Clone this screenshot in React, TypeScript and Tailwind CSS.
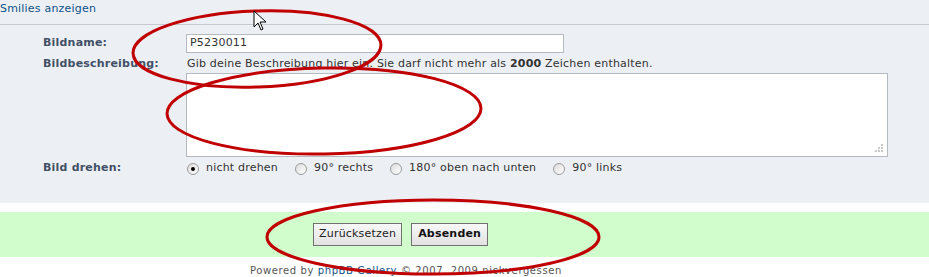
import React from "react";

const font = { fontFamily: '"DejaVu Sans", Verdana, sans-serif' };

function Radio({ checked, label }: { checked?: boolean; label: string }) {
  return (
    <span className="flex items-center">
      <span className="relative w-[12px] h-[12px] rounded-full border border-[#9a9a9a] bg-gradient-to-br from-[#dcdcdc] to-white flex items-center justify-center">
        {checked && <span className="w-[4px] h-[4px] rounded-full bg-black" />}
      </span>
      <span className="ml-[7px]">{label}</span>
    </span>
  );
}

export default function App() {
  return (
    <div className="relative w-[929px] h-[277px] overflow-hidden bg-white text-[11px] tracking-[0.2px] text-[#333333]" style={font}>
      <div className="bg-[#eceff3] h-[203px] flex flex-col">
        <div className="h-[25px] border-b border-[#c6cacf] pt-[1px]">
          <span className="text-[#105289]">Smilies anzeigen</span>
        </div>
        <div className="grid grid-cols-[143px_1fr] pl-[43px] pt-[9px]">
          <div className="font-bold text-[#425067] h-[19px] flex items-center">Bildname:</div>
          <div>
            <div className="w-[378px] h-[19px] border border-[#b4bac0] bg-white flex items-center pl-[3px] text-[#333]">
              P5230011
            </div>
          </div>
          <div className="font-bold text-[#425067] mt-[4px] h-[15px] flex items-center">Bildbeschreibung:</div>
          <div className="mt-[4px] h-[15px] flex items-center pl-[1px]">
            Gib deine Beschreibung hier ein. Sie darf nicht mehr als&nbsp;<b>2000</b>&nbsp;Zeichen enthalten.
          </div>
          <div />
          <div className="pt-[1px]">
            <div className="relative w-[702px] h-[84px] border border-[#b4bac0] bg-white">
              <svg className="absolute right-[3px] bottom-[3px]" width="9" height="9" viewBox="0 0 9 9">
                <rect x="6" y="0" width="2" height="2" fill="#c8c8c8" />
                <rect x="3" y="3" width="2" height="2" fill="#c8c8c8" />
                <rect x="6" y="3" width="2" height="2" fill="#c8c8c8" />
                <rect x="0" y="6" width="2" height="2" fill="#c8c8c8" />
                <rect x="3" y="6" width="2" height="2" fill="#c8c8c8" />
                <rect x="6" y="6" width="2" height="2" fill="#c8c8c8" />
              </svg>
            </div>
          </div>
          <div className="font-bold text-[#425067] mt-[4px] h-[15px] flex items-center">Bild drehen:</div>
          <div className="mt-[4px] h-[15px] flex items-center gap-[17px] pl-[1px]">
            <Radio checked label="nicht drehen" />
            <Radio label="90° rechts" />
            <Radio label="180° oben nach unten" />
            <Radio label="90° links" />
          </div>
        </div>
      </div>
      <div className="h-[9px]" />
      <div className="bg-[#d1fdcd] h-[45px] flex items-center pl-[313px] gap-[9px]">
        <button className="h-[23px] px-[5px] border border-[#707070] bg-gradient-to-b from-[#f8f8f8] to-[#e2e2e2] text-[11px] tracking-[0.2px] text-[#222]" style={font}>
          Zurücksetzen
        </button>
        <button className="h-[23px] px-[6px] border border-[#707070] bg-gradient-to-b from-[#f8f8f8] to-[#e2e2e2] text-[11px] tracking-[0.2px] font-bold text-[#111]" style={font}>
          Absenden
        </button>
      </div>
      <div className="pl-[250px] pt-[6px] text-[10px] text-[#555] tracking-[0.6px]">
        Powered by <span className="text-[#105289]">phpBB Gallery</span> © 2007, 2009 nickvergessen
      </div>

      <svg className="absolute inset-0 pointer-events-none" width="929" height="277">
        <ellipse cx="257" cy="49" rx="124" ry="38" fill="none" stroke="#c00000" strokeWidth="3" transform="rotate(-2 257 49)" />
        <ellipse cx="324" cy="111" rx="157" ry="43" fill="none" stroke="#c00000" strokeWidth="3" transform="rotate(-1 324 111)" />
        <ellipse cx="433" cy="237" rx="166" ry="37" fill="none" stroke="#c00000" strokeWidth="3" />
        <path d="M254 11 L254 27 L258 23 L261 30 L263 29 L260 22 L266 22 Z" fill="white" stroke="black" strokeWidth="1" />
      </svg>
    </div>
  );
}
